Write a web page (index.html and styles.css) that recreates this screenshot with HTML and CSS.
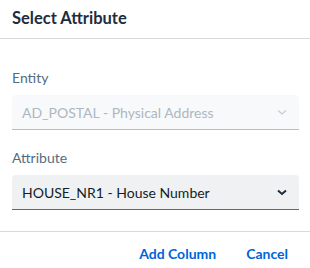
FILE: index.html
```html
<!DOCTYPE html>
<html lang="en">
<head>
    <meta charset="UTF-8">
    <meta name="viewport" content="width=device-width, initial-scale=1.0">
    <title>Select Attribute</title>
    <link rel="stylesheet" href="styles.css">
</head>
<body>
    <div class="dialog">
        <div class="dialog-header">
            <h1>Select Attribute</h1>
        </div>

        <div class="dialog-body">
            <label class="field-label" for="entity">Entity</label>
            <div class="select disabled" id="entity">
                <span class="select-value">AD_POSTAL - Physical Address</span>
                <svg class="select-arrow" width="12" height="12" viewBox="0 0 12 12">
                    <path d="M2 4.5 L6 8 L10 4.5" fill="none" stroke="currentColor" stroke-width="1.3"/>
                </svg>
            </div>

            <label class="field-label" for="attribute">Attribute</label>
            <div class="select" id="attribute">
                <span class="select-value">HOUSE_NR1 - House Number</span>
                <svg class="select-arrow" width="12" height="12" viewBox="0 0 12 12">
                    <path d="M2 4.5 L6 8 L10 4.5" fill="none" stroke="currentColor" stroke-width="2"/>
                </svg>
            </div>
        </div>

        <div class="dialog-footer">
            <button type="button" class="btn">Add Column</button>
            <button type="button" class="btn">Cancel</button>
        </div>
    </div>
</body>
</html>
```

FILE: styles.css
```css
body {
    margin: 0;
    font-family: Lato, "Noto Sans", sans-serif;
    background-color: #fff;
}
.dialog {
    width: 310px;
    height: 268px;
    display: flex;
    flex-direction: column;
}
.dialog-header {
    height: 35px;
    padding: 0 12px 3px;
    border-bottom: 1px solid #d9d9d9;
    display: flex;
    align-items: center;
}
.dialog-header h1 {
    margin: 0;
    font-size: 16.5px;
    font-weight: 700;
    color: #1d2d3e;
}
.dialog-body {
    padding: 30px 11px 0 12px;
    flex: 1;
}
.field-label {
    display: block;
    font-size: 14px;
    line-height: 18px;
    color: #556b82;
    margin-bottom: 8px;
}
.select {
    height: 34px;
    display: flex;
    align-items: center;
    justify-content: space-between;
    padding: 0 11px 0 10px;
    background-color: #eff1f2;
    border-radius: 4px 4px 0 0;
    border-bottom: 1px solid #556b82;
    margin-bottom: 19px;
    font-size: 14px;
    color: #131e29;
}
.select.disabled {
    background-color: #f8f9fa;
    border-bottom-color: #b4bfcb;
    color: #adb7c1;
}
.select-arrow {
    color: #1d2d3e;
}
.select.disabled .select-arrow {
    color: #c4ccd4;
}
.dialog-footer {
    height: 29px;
    padding: 7px 11px 0 0;
    border-top: 1px solid #d9d9d9;
    display: flex;
    justify-content: flex-end;
    align-items: center;
    gap: 8px;
}
.btn {
    font-family: inherit;
    font-size: 14px;
    font-weight: 700;
    color: #0064d9;
    background: none;
    border: none;
    padding: 6px 11px;
    cursor: pointer;
}
```
